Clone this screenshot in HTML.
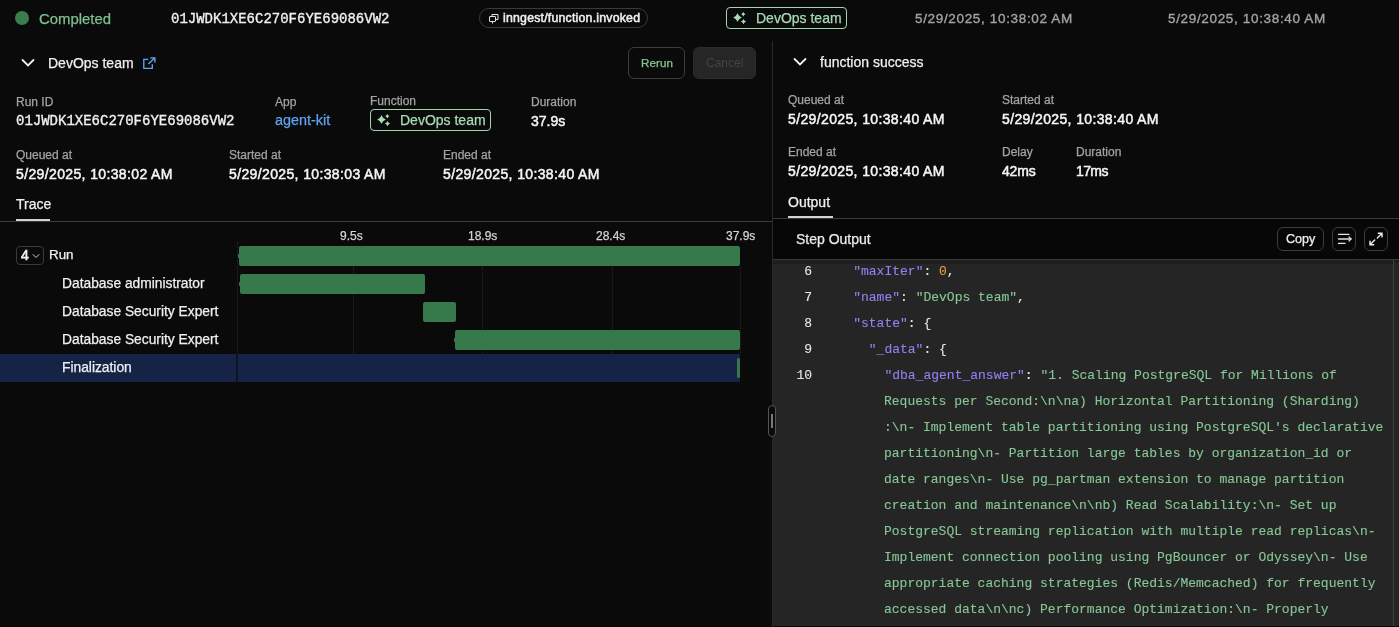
<!DOCTYPE html>
<html><head><meta charset="utf-8">
<style>
*{box-sizing:border-box;margin:0;padding:0}
html,body{will-change:transform;-webkit-text-stroke-width:.25px;width:1399px;height:627px;overflow:hidden;background:#0a0a0a;color:#ededed;font-family:"Liberation Sans",sans-serif;font-size:14px}
.a{position:absolute;white-space:nowrap}
.mono{font-family:"Liberation Mono",monospace;-webkit-text-stroke:.35px #f0f0f0}
.lbl{font-size:12px;color:#a3a3a3}
.val{font-size:14px;font-weight:400;color:#f5f5f5;letter-spacing:.37px;-webkit-text-stroke:.5px #f5f5f5}
.tick{font-size:12px;color:#d4d4d4}
.row{position:absolute;left:62px;font-size:13.8px;color:#f0f0f0;white-space:nowrap}
.bar{position:absolute;background:#367a4b;border-radius:2px;height:20px}
.grid{position:absolute;top:267px;height:86px;width:0;border-left:1px dotted #262626}
.code{-webkit-text-stroke-width:.1px;position:absolute;font-family:"Liberation Mono",monospace;font-size:13px;line-height:26px;white-space:pre;color:#e5e5e5}
.ln{-webkit-text-stroke-width:.1px;position:absolute;left:3px;width:36px;text-align:right;font-family:"Liberation Mono",monospace;font-size:13px;line-height:26px;color:#e5e5e5}
.k{color:#8f83f2}.s{color:#86c795}.n{color:#e5a03a}
.btn{position:absolute;border:1px solid #3b3d3c;border-radius:6px}
</style></head><body>
<!-- top bar -->
<div class="a" style="left:15px;top:11px;width:14px;height:14px;border-radius:50%;background:#3b7d4f"></div>
<div class="a" style="left:39px;top:10.5px;font-size:14.9px;color:#7fbf8e">Completed</div>
<div class="a mono" style="left:171px;top:11px;font-size:14px;color:#f0f0f0">01JWDK1XE6C270F6YE69086VW2</div>
<div class="a" style="left:479px;top:8px;width:169px;height:20px;border:1px solid #3a3a3a;border-radius:10px"></div>
<svg class="a" style="left:489px;top:13px" width="10" height="11" viewBox="0 0 10 11" fill="none" stroke="#e5e5e5" stroke-width="1"><rect x="0.5" y="3.5" width="6" height="5" rx="0.5"/><path d="M3 3.5V1.5h6v5H6.5M3.5 8.5v2"/></svg>
<div class="a" style="left:503px;top:11px;font-size:12.3px;letter-spacing:.22px;font-weight:400;color:#f0f0f0;-webkit-text-stroke-width:.5px">inngest/function.invoked</div>
<div class="a" style="left:726px;top:7px;width:121px;height:22px;border:1px solid #9fd6ac;border-radius:4px"></div>
<svg class="a" style="left:733px;top:12px" width="14" height="13" viewBox="0 0 14 13" fill="#a6dbb3"><path d="M4.5 1.2000000000000002Q5.704 4.296 8.8 5.5Q5.704 6.704 4.5 9.8Q3.2960000000000003 6.704 0.20000000000000018 5.5Q3.2960000000000003 4.296 4.5 1.2000000000000002ZM10.3 0.09999999999999964Q10.916 1.6839999999999997 12.5 2.3Q10.916 2.916 10.3 4.5Q9.684000000000001 2.916 8.100000000000001 2.3Q9.684000000000001 1.6839999999999997 10.3 0.09999999999999964ZM10.5 6.8999999999999995Q11.256 8.844 13.2 9.6Q11.256 10.356 10.5 12.3Q9.744 10.356 7.8 9.6Q9.744 8.844 10.5 6.8999999999999995Z"/></svg>
<div class="a" style="left:756px;top:10px;font-size:14px;color:#a6dbb3">DevOps team</div>
<div class="a" style="left:915px;top:10.5px;font-size:13.5px;letter-spacing:.66px;-webkit-text-stroke-width:.35px;color:#a3a3a3">5/29/2025, 10:38:02 AM</div>
<div class="a" style="left:1168px;top:10.5px;font-size:13.5px;letter-spacing:.66px;-webkit-text-stroke-width:.35px;color:#a3a3a3">5/29/2025, 10:38:40 AM</div>

<!-- left panel header -->
<svg class="a" style="left:21px;top:57px" width="14" height="12" viewBox="0 0 14 12" fill="none" stroke="#f0f0f0" stroke-width="1.8" stroke-linecap="round"><path d="M1.5 3l5.5 5.5 5.5-5.5"/></svg>
<div class="a" style="left:48px;top:55px;font-size:14px;color:#f0f0f0">DevOps team</div>
<svg class="a" style="left:143px;top:57px" width="13" height="13" viewBox="0 0 13 13" fill="none" stroke="#5ea5f2" stroke-width="1.35"><path d="M5.2 2.3H0.8V11.3H9.3V7.2"/><path d="M7.3 0.8h4.6v4.6M11.6 1.1L5.4 7.1"/></svg>
<div class="btn" style="left:628px;top:47px;width:57px;height:32px"></div>
<div class="a" style="left:641px;top:55.5px;font-size:11.6px;letter-spacing:.1px;color:#86c795">Rerun</div>
<div class="a" style="left:693px;top:47px;width:63px;height:32px;background:#262626;border:1px solid #2c2c2c;border-radius:6px"></div>
<div class="a" style="left:706px;top:56px;font-size:12px;color:#444;-webkit-text-stroke-width:0">Cancel</div>

<div class="a lbl" style="left:16px;top:95px">Run ID</div>
<div class="a mono" style="left:16px;top:113px;font-size:14px;color:#f0f0f0">01JWDK1XE6C270F6YE69086VW2</div>
<div class="a lbl" style="left:275px;top:95px">App</div>
<div class="a" style="left:275px;top:112px;font-size:14.4px;color:#5ea3ef">agent-kit</div>
<div class="a lbl" style="left:370px;top:94px">Function</div>
<div class="a" style="left:370px;top:109px;width:121px;height:22px;border:1px solid #9fd6ac;border-radius:4px"></div>
<svg class="a" style="left:377px;top:114px" width="14" height="13" viewBox="0 0 14 13" fill="#a6dbb3"><path d="M4.5 1.2000000000000002Q5.704 4.296 8.8 5.5Q5.704 6.704 4.5 9.8Q3.2960000000000003 6.704 0.20000000000000018 5.5Q3.2960000000000003 4.296 4.5 1.2000000000000002ZM10.3 0.09999999999999964Q10.916 1.6839999999999997 12.5 2.3Q10.916 2.916 10.3 4.5Q9.684000000000001 2.916 8.100000000000001 2.3Q9.684000000000001 1.6839999999999997 10.3 0.09999999999999964ZM10.5 6.8999999999999995Q11.256 8.844 13.2 9.6Q11.256 10.356 10.5 12.3Q9.744 10.356 7.8 9.6Q9.744 8.844 10.5 6.8999999999999995Z"/></svg>
<div class="a" style="left:400px;top:112px;font-size:14px;color:#a6dbb3">DevOps team</div>
<div class="a lbl" style="left:531px;top:95px">Duration</div>
<div class="a val" style="left:531px;top:113px;letter-spacing:0">37.9s</div>

<div class="a lbl" style="left:16px;top:148px">Queued at</div>
<div class="a val" style="left:16px;top:166px">5/29/2025, 10:38:02 AM</div>
<div class="a lbl" style="left:229px;top:148px">Started at</div>
<div class="a val" style="left:229px;top:166px">5/29/2025, 10:38:03 AM</div>
<div class="a lbl" style="left:443px;top:148px">Ended at</div>
<div class="a val" style="left:443px;top:166px">5/29/2025, 10:38:40 AM</div>

<div class="a" style="left:16px;top:196px;font-size:14px;color:#f0f0f0">Trace</div>
<div class="a" style="left:0;top:221px;width:772px;height:1px;background:#383b3a"></div>
<div class="a" style="left:16px;top:219px;width:34px;height:2px;background:#d4d4d4"></div>

<!-- timeline -->
<div class="a tick" style="left:340px;top:229px">9.5s</div>
<div class="a tick" style="left:468px;top:229px">18.9s</div>
<div class="a tick" style="left:596px;top:229px">28.4s</div>
<div class="a tick" style="left:726px;top:229px">37.9s</div>
<div class="grid" style="left:237px;top:242px;height:112px"></div>
<div class="grid" style="left:353px"></div>
<div class="grid" style="left:482px"></div>
<div class="grid" style="left:612px"></div>
<div class="grid" style="left:740px"></div>

<div class="a" style="left:0;top:354px;width:740px;height:28px;background:#152346"></div>
<div class="a" style="left:236px;top:354px;width:2px;height:28px;background:#0d1426"></div>

<div class="a" style="left:16px;top:246px;width:28px;height:19px;border:1px solid #3a3a3a;border-radius:4px"></div>
<div class="a" style="left:21px;top:247px;font-size:14px;color:#f0f0f0;-webkit-text-stroke:.6px #f0f0f0">4</div>
<svg class="a" style="left:32px;top:253px" width="8" height="6" viewBox="0 0 8 6" fill="none" stroke="#cfcfcf" stroke-width="1"><path d="M0.8 1.3l3.2 3.2 3.2-3.2"/></svg>
<div class="a" style="left:49px;top:247px;font-size:13.4px;color:#f0f0f0">Run</div>
<div class="row" style="top:276px">Database administrator</div>
<div class="row" style="top:304px">Database Security Expert</div>
<div class="row" style="top:332px">Database Security Expert</div>
<div class="row" style="top:360px">Finalization</div>

<div class="bar" style="left:239px;top:246px;width:501px"></div>
<div class="bar" style="left:240px;top:274px;width:185px"></div>
<div class="bar" style="left:423px;top:302px;width:33px"></div>
<div class="bar" style="left:455px;top:330px;width:285px"></div>
<div class="bar" style="left:737px;top:358px;width:3px"></div>
<div class="a" style="left:238px;top:254px;width:1px;height:4px;background:#5a5a5a"></div>
<div class="a" style="left:239px;top:282px;width:1px;height:4px;background:#5a5a5a"></div>
<div class="a" style="left:454px;top:338px;width:1px;height:4px;background:#5a5a5a"></div>

<!-- divider -->
<div class="a" style="left:772px;top:41px;width:1px;height:586px;background:#2a2a2a"></div>

<!-- right panel -->
<svg class="a" style="left:793px;top:56px" width="14" height="12" viewBox="0 0 14 12" fill="none" stroke="#f0f0f0" stroke-width="1.8" stroke-linecap="round"><path d="M1.5 3l5.5 5.5 5.5-5.5"/></svg>
<div class="a" style="left:820px;top:54px;font-size:14px;color:#f0f0f0">function success</div>
<div class="a lbl" style="left:788px;top:93px">Queued at</div>
<div class="a val" style="left:788px;top:110.5px">5/29/2025, 10:38:40 AM</div>
<div class="a lbl" style="left:1002px;top:93px">Started at</div>
<div class="a val" style="left:1002px;top:110.5px">5/29/2025, 10:38:40 AM</div>
<div class="a lbl" style="left:788px;top:145px">Ended at</div>
<div class="a val" style="left:788px;top:162.5px">5/29/2025, 10:38:40 AM</div>
<div class="a lbl" style="left:1002px;top:145px">Delay</div>
<div class="a val" style="left:1002px;top:162.5px;letter-spacing:-.2px">42ms</div>
<div class="a lbl" style="left:1076px;top:145px">Duration</div>
<div class="a val" style="left:1076px;top:162.5px;letter-spacing:-.6px">17ms</div>

<div class="a" style="left:788px;top:194px;font-size:14px;color:#f0f0f0">Output</div>
<div class="a" style="left:773px;top:218px;width:626px;height:1px;background:#383b3a"></div>
<div class="a" style="left:788px;top:216px;width:45px;height:2px;background:#d4d4d4"></div>
<div class="a" style="left:773px;top:219px;width:626px;height:40px;background:#070707"></div>
<div class="a" style="left:796px;top:231px;font-size:14px;color:#ececec">Step Output</div>
<div class="btn" style="left:1277px;top:227px;width:47px;height:24px"></div>
<div class="a" style="left:1286px;top:232px;font-size:12.6px;color:#f0f0f0">Copy</div>
<div class="btn" style="left:1332px;top:227px;width:24px;height:24px"></div>
<svg class="a" style="left:1337px;top:232px" width="16" height="14" viewBox="0 0 16 14" fill="none" stroke="#e5e5e5" stroke-width="1.3" stroke-linecap="round"><path d="M1.5 2.3h10.5M1.5 7h12.5M1.5 11.4h6.5"/><path d="M12 5l2 2-2 2" stroke-width="1.2"/></svg>
<div class="btn" style="left:1364px;top:227px;width:24px;height:24px"></div>
<svg class="a" style="left:1368px;top:231px" width="16" height="16" viewBox="0 0 16 16" fill="none" stroke="#f0f0f0" stroke-width="1.4" stroke-linecap="round"><path d="M14 2.2L9.3 6.9M10.3 2.2H14V5.9M2 13.8L6.7 9.1M2 10.1V13.8H5.7"/></svg>
<div class="a" style="left:773px;top:259px;width:626px;height:1px;background:#383b3a"></div>

<div class="a" style="left:773px;top:260px;width:626px;height:367px;background:#252525;overflow:hidden">
<div class="a" style="left:0;top:0;width:626px;height:3px;background:#1e1e1e"></div>
<div class="a" style="left:0;top:3px;width:620px;height:1px;border-top:1px dotted #161616"></div>
<div class="a" style="left:620px;top:0;width:1px;height:400px;background:#3a4540"></div>
<div class="a" style="left:0;top:366px;width:626px;height:1px;background:#0a0a0a"></div>
<div class="ln" style="top:-1px">6</div>
<div class="code" style="left:49px;top:-1px">    <span class="k">"maxIter"</span>: <span class="n">0</span>,</div>
<div class="ln" style="top:25px">7</div>
<div class="code" style="left:49px;top:25px">    <span class="k">"name"</span>: <span class="s">"DevOps team"</span>,</div>
<div class="ln" style="top:51px">8</div>
<div class="code" style="left:49px;top:51px">    <span class="k">"state"</span>: {</div>
<div class="ln" style="top:77px">9</div>
<div class="code" style="left:49px;top:77px">      <span class="k">"_data"</span>: {</div>
<div class="ln" style="top:103px">10</div>
<div class="code" style="left:49px;top:103px">        <span class="k">"dba_agent_answer"</span>: <span class="s">"1. Scaling PostgreSQL for Millions of</span></div>
<div class="code s" style="left:111px;top:129px">Requests per Second:\n\na) Horizontal Partitioning (Sharding)</div>
<div class="code s" style="left:111px;top:155px">:\n- Implement table partitioning using PostgreSQL's declarative</div>
<div class="code s" style="left:111px;top:181px">partitioning\n- Partition large tables by organization_id or</div>
<div class="code s" style="left:111px;top:207px">date ranges\n- Use pg_partman extension to manage partition</div>
<div class="code s" style="left:111px;top:233px">creation and maintenance\n\nb) Read Scalability:\n- Set up</div>
<div class="code s" style="left:111px;top:259px">PostgreSQL streaming replication with multiple read replicas\n-</div>
<div class="code s" style="left:111px;top:285px">Implement connection pooling using PgBouncer or Odyssey\n- Use</div>
<div class="code s" style="left:111px;top:311px">appropriate caching strategies (Redis/Memcached) for frequently</div>
<div class="code s" style="left:111px;top:337px">accessed data\n\nc) Performance Optimization:\n- Properly</div>
</div>

<!-- resize handle -->
<div class="a" style="left:768px;top:405px;width:8px;height:32px;border:1px solid #525553;border-radius:4px;background:#0a0a0a"></div>
<div class="a" style="left:771px;top:414px;width:2px;height:14px;background:#787878"></div>
</body></html>
